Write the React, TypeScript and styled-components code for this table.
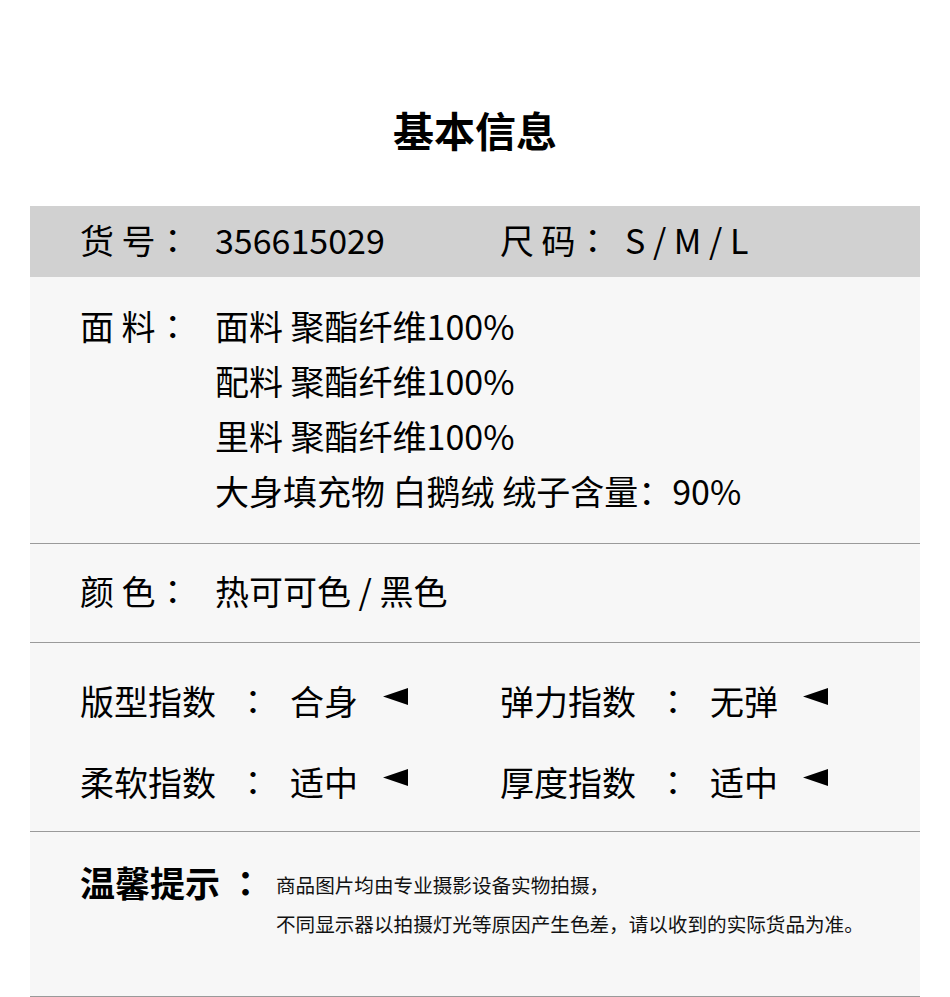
import React from 'react'
import styled, { createGlobalStyle } from 'styled-components'

const GlobalStyle = createGlobalStyle`
  html, body {
    margin: 0;
    padding: 0;
    background: #ffffff;
  }
  body {
    font-family: "Noto Sans CJK SC", "Noto Sans", sans-serif;
    color: #000;
  }
`

const Page = styled.div`
  width: 950px;
`

const Title = styled.h1`
  margin: 0;
  padding: 99px 0 47px;
  text-align: center;
  font-size: 41px;
  line-height: 60px;
  font-weight: 700;
  color: #000;
`

const Panel = styled.div`
  margin: 0 30px;
  background: #f7f7f7;
`

const HeaderRow = styled.div`
  height: 71px;
  box-sizing: border-box;
  background: #d1d1d1;
  padding: 0 0 3px 50px;
  display: flex;
  align-items: center;
  font-size: 34px;
  line-height: 40px;
`

const Group = styled.div<{ $width?: number }>`
  display: flex;
  align-items: center;
  width: ${({ $width }) => ($width ? `${$width}px` : 'auto')};
  flex: none;
`

const Label = styled.div<{ $width: number }>`
  width: ${({ $width }) => $width}px;
  flex: none;
  white-space: pre;
`

/* centred full-width colon, as the Japanese face draws it */
const Punct = styled.span`
  font-family: "Noto Sans CJK JP", "Noto Sans CJK SC", sans-serif;
`

const Value = styled.div`
  white-space: pre;
`

const Section = styled.div<{ $pad: string }>`
  padding: ${({ $pad }) => $pad};
  padding-left: 50px;
  border-bottom: 1px solid #9a9a9a;
  font-size: 34px;
`

const Field = styled.div`
  display: flex;
  align-items: flex-start;
  line-height: 55px;
`

const Lines = styled.div`
  display: flex;
  flex-direction: column;
  white-space: pre;
`

const IndexGrid = styled.div`
  display: flex;
  flex-direction: column;
  gap: 47px;
`

const IndexRow = styled.div`
  display: flex;
  line-height: 34px;
`

const IndexCell = styled.div`
  width: 420px;
  flex: none;
  display: flex;
  align-items: center;
`

const IndexName = styled.div`
  width: 136px;
  flex: none;
`

const Colon = styled(Punct)`
  width: 74px;
  flex: none;
  text-align: center;
`

const Marker = styled.svg`
  margin-left: 25px;
  margin-bottom: 9px;
  flex: none;
`

const TipRow = styled.div`
  display: flex;
  align-items: flex-start;
  min-height: 133px;
`

const TipLabel = styled.div`
  width: 196px;
  flex: none;
  font-size: 35px;
  line-height: 40px;
  font-weight: 700;
  white-space: pre;
`

const TipText = styled.div`
  margin-top: 3px;
  font-size: 19.6px;
  line-height: 39px;
  color: #111;
`

const indexes = [
  [
    { name: '版型指数', value: '合身' },
    { name: '弹力指数', value: '无弹' },
  ],
  [
    { name: '柔软指数', value: '适中' },
    { name: '厚度指数', value: '适中' },
  ],
]

const materials = [
  '面料 聚酯纤维100%',
  '配料 聚酯纤维100%',
  '里料 聚酯纤维100%',
  '大身填充物 白鹅绒 绒子含量：90%',
]

function Arrow() {
  return (
    <Marker width="25" height="17" viewBox="0 0 25 17">
      <polygon points="0,8.5 25,0 25,17" fill="#000" />
    </Marker>
  )
}

export default function App() {
  return (
    <Page>
      <GlobalStyle />
      <Title>基本信息</Title>
      <Panel>
        <HeaderRow>
          <Group $width={420}>
            <Label $width={135}>
              货 号<Punct>：</Punct>
            </Label>
            <Value>356615029</Value>
          </Group>
          <Group>
            <Label $width={125}>
              尺 码<Punct>：</Punct>
            </Label>
            <Value>S / M / L</Value>
          </Group>
        </HeaderRow>

        <Section $pad="21px 0 25px">
          <Field>
            <Label $width={135}>
              面 料<Punct>：</Punct>
            </Label>
            <Lines>
              {materials.map((m) => (
                <span key={m}>{m}</span>
              ))}
            </Lines>
          </Field>
        </Section>

        <Section $pad="19px 0 24px">
          <Field>
            <Label $width={135}>
              颜 色<Punct>：</Punct>
            </Label>
            <Value>热可可色 / 黑色</Value>
          </Field>
        </Section>

        <Section $pad="41px 0 32px">
          <IndexGrid>
            {indexes.map((row, i) => (
              <IndexRow key={i}>
                {row.map((item) => (
                  <IndexCell key={item.name}>
                    <IndexName>{item.name}</IndexName>
                    <Colon>：</Colon>
                    <Value>{item.value}</Value>
                    <Arrow />
                  </IndexCell>
                ))}
              </IndexRow>
            ))}
          </IndexGrid>
        </Section>

        <Section $pad="30px 0 1px">
          <TipRow>
            <TipLabel>
              温馨提示 <Punct>：</Punct>
            </TipLabel>
            <TipText>
              商品图片均由专业摄影设备实物拍摄，
              <br />
              不同显示器以拍摄灯光等原因产生色差，请以收到的实际货品为准。
            </TipText>
          </TipRow>
        </Section>
      </Panel>
    </Page>
  )
}
